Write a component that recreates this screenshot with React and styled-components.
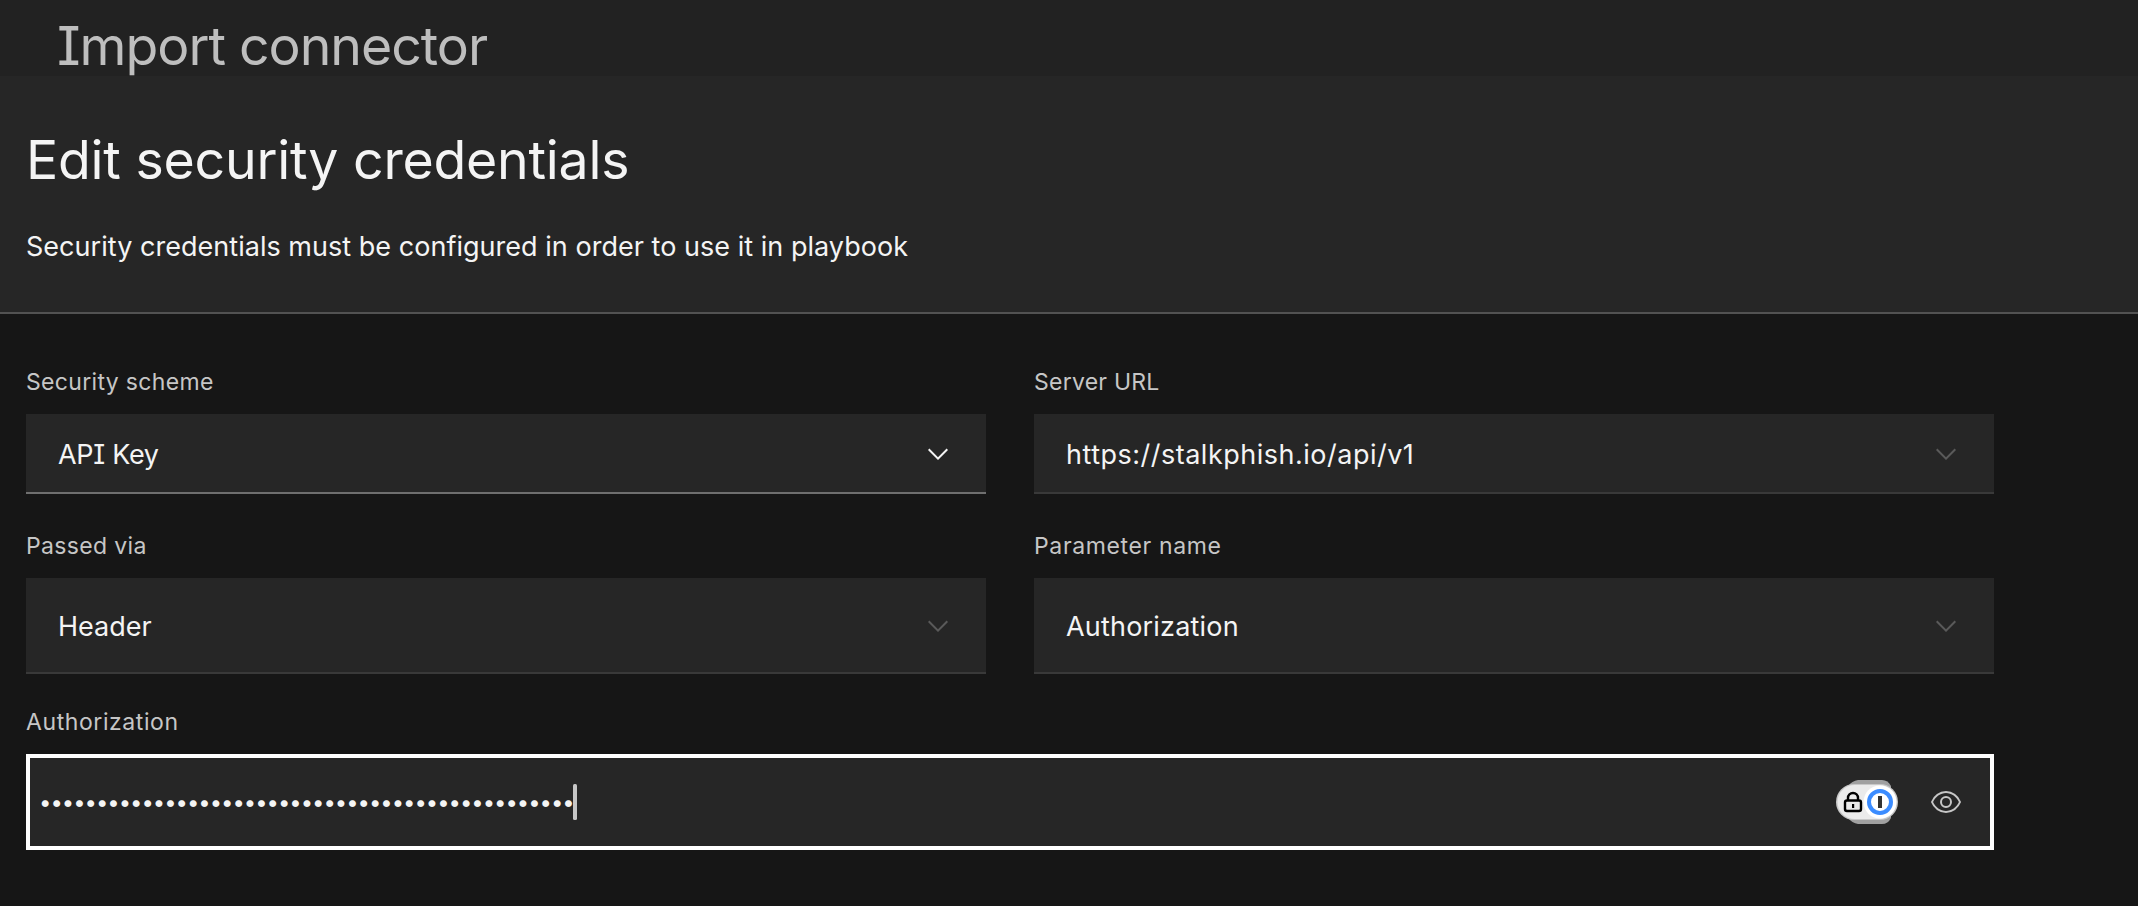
import React from 'react';
import styled, { createGlobalStyle } from 'styled-components';

const GlobalStyle = createGlobalStyle`
  *, *::before, *::after { box-sizing: border-box; }
  body {
    margin: 0;
    background: #161616;
    color: #f4f4f4;
    font-family: Inter, "Noto Sans", sans-serif;
    font-feature-settings: "cv08" 1;
  }
  h1, h2, p { margin: 0; font-weight: 400; }
`;

const Page = styled.div`
  display: flex;
  flex-direction: column;
  height: 906px;
  overflow: hidden;
  background: #161616;
`;

const TopBar = styled.header`
  height: 76px;
  padding: 14px 0 0 57px;
  overflow: hidden;
  background: #222222;
`;

const TopTitle = styled.h1`
  font-size: 53.6px;
  line-height: 64px;
  letter-spacing: -1.02px;
  color: #bebebe;
`;

const Intro = styled.section`
  height: 238px;
  padding: 52px 26px 0;
  background: #262626;
  border-bottom: 2px solid #525252;
`;

const Title = styled.h2`
  font-size: 53.6px;
  line-height: 64px;
  letter-spacing: -0.23px;
`;

const Description = styled.p`
  margin-top: 37px;
  font-size: 27px;
  line-height: 36px;
  letter-spacing: 0.03px;
`;

const Form = styled.form`
  display: flex;
  flex-direction: column;
  width: 1994px;
  padding: 52px 0 0 26px;
`;

const FieldRow = styled.div`
  display: grid;
  grid-template-columns: repeat(${(p) => p.$columns}, 1fr);
  column-gap: 48px;
  margin-bottom: ${(p) => p.$gap}px;
`;

const Field = styled.div`
  display: flex;
  flex-direction: column;
  gap: 16px;
`;

const Label = styled.label`
  font-size: 23px;
  line-height: 32px;
  letter-spacing: ${(p) => p.$tracking}px;
  color: #c6c6c6;
`;

const Select = styled.div`
  display: flex;
  align-items: center;
  justify-content: space-between;
  height: ${(p) => p.$height}px;
  padding: 0 32px;
  background: #262626;
  box-shadow: inset 0 -2px 0 ${(p) => (p.$disabled ? '#393939' : '#6f6f6f')};
`;

const Value = styled.span`
  padding-top: 2px;
  font-size: 27px;
  line-height: 36px;
  letter-spacing: ${(p) => p.$tracking}px;
  white-space: nowrap;
`;

const Icon = styled.svg`
  display: block;
  flex: none;
  width: 32px;
  height: 32px;
  fill: ${(p) => p.$color};
`;

const PasswordBox = styled.div`
  display: flex;
  align-items: center;
  height: 96px;
  padding: 0 28px 0 9px;
  border: 4px solid #ffffff;
  background: #262626;
`;

const Mask = styled.span`
  font-size: 22px;
  line-height: 36px;
  letter-spacing: -1px;
  white-space: nowrap;
`;

const Caret = styled.span`
  width: 4px;
  height: 36px;
  margin-left: -1px;
  border-radius: 1.5px;
  background: #c6c6c6;
`;

const Actions = styled.div`
  display: flex;
  align-items: center;
  gap: 32px;
  margin-left: auto;
`;

const ManagerIcon = styled.svg`
  display: block;
  width: 62px;
  height: 44px;
`;

function Chevron({ disabled }) {
  return (
    <Icon viewBox="0 0 16 16" $color={disabled ? '#5a5a5a' : '#f4f4f4'} aria-hidden="true">
      <path d="M8 11 3 6 3.7 5.3 8 9.6 12.3 5.3 13 6z" />
    </Icon>
  );
}

function SelectField({ label, labelTracking, value, tracking, height, disabled }) {
  return (
    <Field>
      <Label $tracking={labelTracking}>{label}</Label>
      <Select $height={height} $disabled={disabled}>
        <Value $tracking={tracking}>{value}</Value>
        <Chevron disabled={disabled} />
      </Select>
    </Field>
  );
}

function PasswordManager() {
  return (
    <ManagerIcon viewBox="0 0 62 44" aria-hidden="true">
      <path d="M22 0H46Q52 0 55 6V38Q52 44 46 44H22Q16 43 12 38V6Q16 1 22 0Z" fill="#a0a0a0" />
      <rect x="0" y="4" width="62" height="36" rx="18" fill="#c8c8c8" />
      <rect x="1.5" y="5" width="59" height="34" rx="17" fill="#ebebeb" />
      <circle cx="44" cy="22" r="16.5" fill="#ffffff" />
      <circle cx="44" cy="22" r="11" fill="none" stroke="#3b8cff" strokeWidth="4" />
      <rect x="42" y="16" width="4" height="12" fill="#333333" />
      <rect x="9" y="20.5" width="16" height="10.5" rx="2" fill="none" stroke="#000000" strokeWidth="2.4" />
      <path d="M12 20.5V18a5 5 0 0 1 10 0V20.5" fill="none" stroke="#000000" strokeWidth="2.4" />
      <rect x="16" y="24" width="2.2" height="4" fill="#000000" />
    </ManagerIcon>
  );
}

export default function App() {
  return (
    <Page>
      <GlobalStyle />
      <TopBar>
        <TopTitle>Import connector</TopTitle>
      </TopBar>
      <Intro>
        <Title>Edit security credentials</Title>
        <Description>Security credentials must be configured in order to use it in playbook</Description>
      </Intro>
      <Form>
        <FieldRow $columns={2} $gap={36}>
          <SelectField label="Security scheme" labelTracking={0.33} value="API Key" tracking={-0.3} height={80} />
          <SelectField label="Server URL" labelTracking={0.25} value="https://stalkphish.io/api/v1" tracking={0.5} height={80} disabled />
        </FieldRow>
        <FieldRow $columns={2} $gap={32}>
          <SelectField label="Passed via" labelTracking={0.35} value="Header" tracking={0} height={96} disabled />
          <SelectField label="Parameter name" labelTracking={0.64} value="Authorization" tracking={0.2} height={96} disabled />
        </FieldRow>
        <FieldRow $columns={1} $gap={0}>
          <Field>
            <Label $tracking={0.58}>Authorization</Label>
            <PasswordBox>
              <Mask>{'•'.repeat(47)}</Mask>
              <Caret />
              <Actions>
                <PasswordManager />
                <Icon viewBox="0 0 32 32" $color="#c6c6c6" aria-hidden="true">
                  <path d="M30.94,15.66A16.69,16.69,0,0,0,16,5,16.69,16.69,0,0,0,1.06,15.66a1,1,0,0,0,0,.68A16.69,16.69,0,0,0,16,27,16.69,16.69,0,0,0,30.94,16.34,1,1,0,0,0,30.94,15.66ZM16,25c-5.3,0-10.9-3.93-12.93-9C5.1,10.93,10.7,7,16,7s10.9,3.93,12.93,9C26.9,21.07,21.3,25,16,25Z" />
                  <path d="M16,10a6,6,0,1,0,6,6A6,6,0,0,0,16,10Zm0,10a4,4,0,1,1,4-4A4,4,0,0,1,16,20Z" />
                </Icon>
              </Actions>
            </PasswordBox>
          </Field>
        </FieldRow>
      </Form>
    </Page>
  );
}
